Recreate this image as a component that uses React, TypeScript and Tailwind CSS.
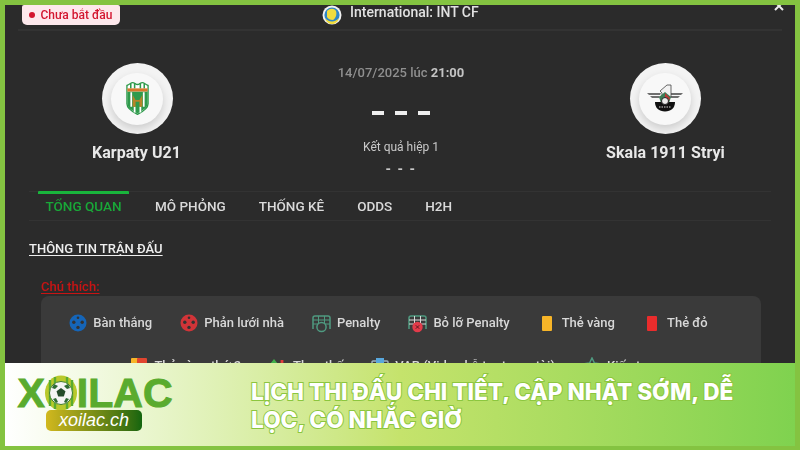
import React from 'react';

const Ball = ({ color }: { color: string }) => (
  <svg width="18" height="18" viewBox="0 0 18 18">
    <circle cx="9" cy="9" r="8.500" fill={color} />
    <circle cx="4.800" cy="8.200" r="1.700" fill="#333" />
    <circle cx="13.200" cy="8.200" r="1.700" fill="#333" />
    <circle cx="9" cy="3.700" r="1.300" fill="#333" />
    <circle cx="9" cy="13.400" r="1.700" fill="#333" />
  </svg>
);

const Net = ({ miss }: { miss?: boolean }) => (
  <svg width="19" height="19" viewBox="0 0 19 19" fill="none">
    <path d="M1 15V4a2 2 0 0 1 2-2h13a2 2 0 0 1 2 2v11" stroke="#4f9a80" strokeWidth="1.5" />
    <path d="M1 6h17M1 10h17M6.5 2v11M12.5 2v11" stroke={miss ? '#d9d9d9' : '#4f9a80'} strokeWidth="1" />
    {miss ? (
      <>
        <circle cx="9.5" cy="13" r="5.2" fill="#e23b4a" />
        <path d="M7.8 11.3l3.4 3.4M11.2 11.3l-3.4 3.4" stroke="#5b1720" strokeWidth="1" />
      </>
    ) : (
      <circle cx="9.5" cy="13" r="4.6" fill="#3a3a3a" stroke="#4f9a80" strokeWidth="1.5" />
    )}
  </svg>
);

const Card = ({ color }: { color: string }) => (
  <div className="flex w-[18px] justify-center">
    <div className={`h-[15px] w-[10px] rounded-[1px] ${color}`} />
  </div>
);

const DoubleCard = () => (
  <svg width="18" height="16" viewBox="0 0 18 16">
    <rect x="1" y="0" width="10" height="15" rx="1" fill="#f7b528" />
    <rect x="7" y="0" width="10" height="15" rx="1" fill="#e0452f" />
  </svg>
);

const SwapArrows = () => (
  <svg width="18" height="16" viewBox="0 0 18 16">
    <path d="M5 1l4 5H6.400v8H3.600V6H1z" fill="#3fae4a" />
    <path d="M13 15L9 10h2.600V2h2.800v8H17z" fill="#e23b3b" />
  </svg>
);

const VarIcon = () => (
  <svg width="18" height="18" viewBox="0 0 18 18" fill="none">
    <rect x="1" y="4" width="16" height="12" rx="1" stroke="#9fb4c4" strokeWidth="1.4" />
    <rect x="5" y="1" width="8" height="5" fill="#58a7dc" />
  </svg>
);

const AssistIcon = () => (
  <svg width="18" height="18" viewBox="0 0 18 18" fill="none">
    <path d="M9 1l2.400 5 5.600.8-4 3.900.9 5.500L9 13.600 4.100 16.200 5 10.700 1 6.800 6.600 6z" stroke="#4f9a80" strokeWidth="1.5" />
  </svg>
);

const Legend = ({ icon, label }: { icon: React.ReactNode; label: string }) => (
  <div className="flex h-[20px] items-center gap-[6px] px-[14px]">
    {icon}
    <span className="text-[13px] font-medium text-[#d8d8d8]">{label}</span>
  </div>
);

const TeamCircle = ({ children }: { children: React.ReactNode }) => (
  <div className="flex h-[71px] w-[71px] items-center justify-center rounded-full bg-[#f3f3f3]">
    <div className="flex h-[52px] w-[52px] items-center justify-center rounded-full bg-[#f8f8f8] shadow-[0_4px_8px_rgba(0,0,0,0.16)]">
      {children}
    </div>
  </div>
);

const KarpatyBadge = () => (
  <svg width="25" height="36" viewBox="0 0 26 36" className="mt-[-2px]">
    <path d="M2 5c3-1 4-3 6-3s3 2 5 2 3-2 5-2 3 2 6 3v19c0 5-5 8-11 11C7 32 2 29 2 24z" fill="#fff" stroke="#2f9a4c" strokeWidth="1.4" />
    <path d="M6 3v5M10 3v5M16 3v5M20 3v5" stroke="#2f9a4c" strokeWidth="1.600" />
    <rect x="2.500" y="8" width="21" height="3.400" fill="#d9772b" />
    <path d="M2.500 11.400h21V24c0 4-5 7-10.500 10C7 31 2.500 28 2.500 24z" fill="#2f9a4c" />
    <path d="M6.500 12v15M19.500 12v15M10 27v6M16 27v6" stroke="#fff" strokeWidth="1.800" />
    <path d="M8 27V15l3 5h4l3-5v12h-3v-5h-4v5z" fill="#b68428" />
  </svg>
);

const SkalaBadge = () => (
  <svg width="38" height="28" viewBox="0 0 38 28" className="mt-[-1px]">
    <path d="M1 9h14l-1 2H3zM37 9H23l1 2h11zM4 12h10l-1 2H6zM34 12H24l1 2h7z" fill="#6f6f6f" />
    <path d="M14 7l7-6h4v12h-9V9z" fill="#f2f2f2" stroke="#444" strokeWidth="0.8" />
    <path d="M13 13l6-5 6 5-2 6h-8z" fill="#3d7d57" />
    <path d="M19 9l5 5-2 5h-3z" fill="#b93a35" />
    <path d="M9 18h20c0 6-4 9.500-10 9.500S9 24 9 18z" fill="#111" />
    <circle cx="19" cy="17" r="3.500" fill="#eee" stroke="#222" />
    <path d="M13 23h12" stroke="#ddd" strokeWidth="1" strokeDasharray="1.500 1" />
  </svg>
);

const LeagueLogo = () => (
  <svg width="20" height="20" viewBox="0 0 20 20">
    <circle cx="10" cy="10" r="9.5" fill="#f2f2f2" />
    <circle cx="10" cy="10" r="7.6" fill="#2e86c7" />
    <path d="M5 6c3-3 7-3 9 0 1 3 0 7-3 9-3 0-5-1-6-3z" fill="#f1dc3d" />
    <path d="M3 13c3 4 10 5 14 0-1 4-4 6-7 6s-6-2-7-6z" fill="#f1dc3d" />
  </svg>
);

const SoccerLogoBall = () => (
  <svg width="34" height="36" viewBox="0 0 34 36" className="mx-[-1px]">
    <ellipse cx="17" cy="18" rx="16" ry="17.5" fill="#b9c92c" />
    <path d="M6 5v26M11 2v32M23 2v32M28 5v26" stroke="#5aab2e" strokeWidth="2.4" />
    <circle cx="17" cy="18" r="11.5" fill="#f4f4f4" stroke="#3f7d28" strokeWidth="1" />
    <path d="M17 13l4.500 3.200-1.700 5.300h-5.600l-1.700-5.300z" fill="#244a2a" />
    <path d="M10 9l4 2-3 3-3-1zM24 9l-4 2 3 3 3-1zM9 24l3-1 2 4-2 1zM25 24l-3-1-2 4 2 1z" fill="#2e6b34" />
  </svg>
);

const tabs = ['MÔ PHỎNG', 'THỐNG KÊ', 'ODDS', 'H2H'];

export default function App() {
  return (
    <div className="flex h-[450px] w-[800px] flex-col overflow-hidden bg-[#84c341] pt-[5px] pr-[5px] pb-[4px] pl-[5px] font-['Roboto',sans-serif]">
      <div className="h-[358px] shrink-0 overflow-hidden bg-[#2b2b2b] blur-[0.35px]">
        {/* league header */}
        <div className="relative mx-[13px] flex h-[26px] items-start justify-between border-b-2 border-[#333333] pl-[4px]">
          <div className="mt-0 flex h-[20px] w-[98px] items-center justify-center gap-[5px] rounded-b-[5px] rounded-t-[2px] bg-[#fde8ec] text-[12px] font-medium text-[#d3152f]">
            <span className="h-[6px] w-[6px] rounded-full bg-[#d3152f]" />
            Chưa bắt đầu
          </div>
          <div className="absolute top-0 left-[304px] flex items-start gap-[8px]">
            <LeagueLogo />
            <span className="text-[14px] leading-[15px] font-medium text-[#e2e2e2]">International: INT CF</span>
          </div>
          <svg width="10" height="6" viewBox="0 0 10 6" className="mr-[-2px]">
            <path d="M1-3l8 8M9-3l-8 8" stroke="#eee" strokeWidth="2" />
          </svg>
        </div>

        {/* match */}
        <div className="mt-[32px] flex h-[128px] pr-[75px] pl-[77px]">
          <div className="flex w-[110px] flex-col items-center">
            <TeamCircle>
              <KarpatyBadge />
            </TeamCircle>
            <div className="mt-[7px] ml-[-1px] text-[16px] font-bold tracking-[0.05px] whitespace-nowrap text-[#e8e8e8]">Karpaty U21</div>
          </div>
          <div className="flex flex-1 flex-col items-center">
            <div className="text-[13px] font-medium text-[#8f8f8f]">
              14/07/2025 lúc <span className="font-bold text-[#c4c4c4]">21:00</span>
            </div>
            <div className="mt-[16px] flex h-[28px] items-center gap-[11px]">
              <span className="h-[4px] w-[12px] bg-[#eeeeee]" />
              <span className="h-[4px] w-[12px] bg-[#eeeeee]" />
              <span className="h-[4px] w-[12px] bg-[#eeeeee]" />
            </div>
            <div className="mt-[11px] text-[12px] text-[#c9c9c9]">Kết quả hiệp 1</div>
            <div className="mt-[3px] text-[14px] font-bold tracking-[1.500px] text-[#c9c9c9]">- - -</div>
          </div>
          <div className="flex w-[110px] flex-col items-center">
            <TeamCircle>
              <SkalaBadge />
            </TeamCircle>
            <div className="mt-[7px] ml-[1px] text-[16px] font-bold tracking-[0.05px] whitespace-nowrap text-[#e8e8e8]">Skala 1911 Stryi</div>
          </div>
        </div>

        {/* tabs */}
        <div className="mx-[24px] flex h-[30px] border-t border-b border-[#333333] pl-[9px] text-[13.5px] leading-[18px] font-medium text-[#dadada]">
          <div className="mt-[-1px] h-[30px] w-[91px] rounded-t-[1px] border-t-[3px] border-[#19b53c] pt-[3px] text-center text-[#19a838]">
            TỔNG QUAN
          </div>
          <div className="flex gap-[33px] pt-[5px] pl-[26px]">
            {tabs.map((tab) => (
              <span key={tab}>{tab}</span>
            ))}
          </div>
        </div>

        <div className="mt-[18px] ml-[24px] text-[13px] font-medium text-[#eeeeee] underline underline-offset-2">THÔNG TIN TRẬN ĐẤU</div>
        <div className="mt-[18px] ml-[36px] text-[13px] font-medium text-[#c81414] underline underline-offset-2">Chú thích:</div>

        {/* legend */}
        <div className="mr-[34px] ml-[36px] flex flex-col gap-y-[23px] rounded-t-[8px] bg-[#3a3a3a] pt-[17px] pb-[10px]">
          <div className="flex justify-center pr-[25px]">
            <Legend icon={<Ball color="#1565b8" />} label="Bàn thắng" />
            <Legend icon={<Ball color="#d13438" />} label="Phản lưới nhà" />
            <Legend icon={<Net />} label="Penalty" />
            <Legend icon={<Net miss />} label="Bỏ lỡ Penalty" />
            <Legend icon={<Card color="bg-[#f7b528]" />} label="Thẻ vàng" />
            <Legend icon={<Card color="bg-[#e92c2c]" />} label="Thẻ đỏ" />
          </div>
          <div className="flex justify-center pr-[17px]">
            <Legend icon={<DoubleCard />} label="Thẻ vàng thứ 2" />
            <Legend icon={<SwapArrows />} label="Thay thế" />
            <Legend icon={<VarIcon />} label="VAR (Video hỗ trợ trọng tài)" />
            <Legend icon={<AssistIcon />} label="Kiến tạo" />
          </div>
        </div>
      </div>

      {/* promo banner */}
      <div className="flex flex-1 items-center bg-gradient-to-r from-[#ffffff] via-[#c5e36c] via-50% to-[#7fd24f]">
        <div className="flex w-[246px] shrink-0 flex-col items-center pr-[78px] pb-[2px] pl-[12px]">
          <div className="flex h-[34px] items-center font-['Liberation_Sans',sans-serif] text-[41px] leading-none font-bold text-[#5aab2e] [-webkit-text-stroke:1px_#5aab2e]">
            <span>X</span>
            <SoccerLogoBall />
            <span>ILAC</span>
          </div>
          <div className="ml-[-2px] flex h-[21px] w-[96px] items-center justify-center rounded-[5px] bg-gradient-to-r from-[#d2b81e] to-[#12650f] font-['Liberation_Sans',sans-serif] text-[18px] text-white italic">
            xoilac.ch
          </div>
        </div>
        <div className="w-[510px] pt-[2px] font-['Inter',sans-serif] text-[22.6px] leading-[28px] font-extrabold text-white [-webkit-text-stroke:2px_#8cc63f] [paint-order:stroke_fill]">
          LỊCH THI ĐẤU CHI TIẾT, CẬP NHẬT SỚM, DỄ LỌC, CÓ NHẮC GIỜ
        </div>
      </div>
    </div>
  );
}
